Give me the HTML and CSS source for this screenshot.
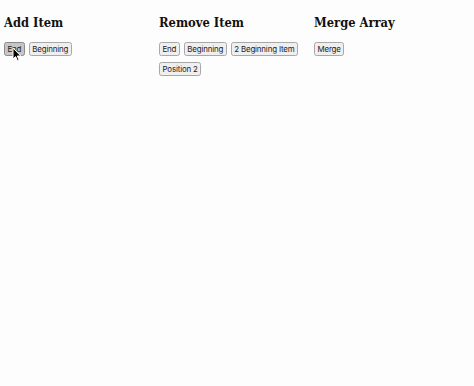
FILE: index.html
```html
<!DOCTYPE html>
<html>
<head>
<meta charset="utf-8">
<link rel="stylesheet" href="styles.css">
</head>
<body>
<div class="page">
  <section class="col">
    <h2 class="title">Add Item</h2>
    <div class="btns">
      <span class="btn-wrap">
        <button class="btn pressed">End</button>
        <svg class="cursor" width="10" height="15" viewBox="0 0 10 15"><path d="M1 1 L1 12 L3.6 9.6 L5.5 13.8 L7.1 13.1 L5.3 9 L8.8 9 Z" fill="#000" stroke="#fff" stroke-width="1"/></svg>
      </span>
      <button class="btn">Beginning</button>
    </div>
  </section>
  <section class="col">
    <h2 class="title">Remove Item</h2>
    <div class="btns">
      <button class="btn">End</button>
      <button class="btn">Beginning</button>
      <button class="btn">2 Beginning Item</button>
      <button class="btn">Position 2</button>
    </div>
  </section>
  <section class="col">
    <h2 class="title">Merge Array</h2>
    <div class="btns">
      <button class="btn">Merge</button>
    </div>
  </section>
</div>
</body>
</html>
```
FILE: styles.css
```css
html, body {
  margin: 0;
  padding: 0;
  background: #fdfdfd;
}
.page {
  display: flex;
  padding: 0 4px;
}
.col {
  width: 155px;
  flex: none;
}
.title {
  font-family: "DejaVu Serif Condensed", "DejaVu Serif", serif;
  font-stretch: condensed;
  font-weight: bold;
  font-size: 12.8px;
  margin: 15px 0 11px 0;
  line-height: 16px;
  color: #111;
}
.btns {
  display: flex;
  flex-wrap: wrap;
  gap: 6px 4px;
}
.btn-wrap {
  position: relative;
  display: inline-flex;
}
.btn {
  font-family: Inter, "Noto Sans", sans-serif;
  font-size: 7.9px;
  letter-spacing: -0.15px;
  line-height: 10px;
  padding: 1px 2.5px;
  height: 14px;
  border: 1px solid #a8a8a8;
  border-radius: 2.5px;
  background: #efefef;
  color: #222;
  margin: 0;
}
.btn.pressed {
  background: #c6c6c6;
  border-color: #8a8a8a;
}
.cursor {
  position: absolute;
  left: 7.5px;
  top: 5px;
}
```
